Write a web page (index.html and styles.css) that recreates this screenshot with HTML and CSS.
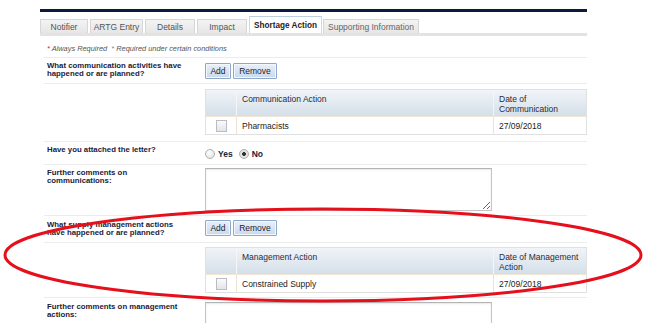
FILE: index.html
```html
<!DOCTYPE html>
<html>
<head>
<meta charset="utf-8">
<link rel="stylesheet" href="styles.css">
</head>
<body>
<div class="page">
  <div class="topbar"></div>
  <div class="tabs">
    <div class="tab t1">Notifier</div>
    <div class="tab t2">ARTG Entry</div>
    <div class="tab t3">Details</div>
    <div class="tab t4">Impact</div>
    <div class="tab active">Shortage Action</div>
    <div class="tab t6">Supporting Information</div>
  </div>
  <div class="strip"></div>
  <div class="req"><span class="star">*</span> Always Required &nbsp;<span class="star2">*</span> Required under certain conditions</div>

  <div class="form">
    <div class="row r1">
      <div class="label">What communication activities have happened or are planned?</div>
      <div class="field btns"><button class="btn">Add</button><button class="btn">Remove</button></div>
    </div>
    <div class="row r2">
      <div class="label"></div>
      <div class="field">
        <table class="grid">
          <tr class="head"><th class="cb"></th><th>Communication Action</th><th class="date">Date of Communication</th></tr>
          <tr><td class="cb"><span class="check"></span></td><td>Pharmacists</td><td class="date">27/09/2018</td></tr>
        </table>
      </div>
    </div>
    <div class="row r3">
      <div class="label">Have you attached the letter?</div>
      <div class="field radios">
        <span class="radio"></span><span class="rlabel">Yes</span>
        <span class="radio on"></span><span class="rlabel">No</span>
      </div>
    </div>
    <div class="row r4">
      <div class="label">Further comments on communications:</div>
      <div class="field"><textarea class="ta"></textarea></div>
    </div>
    <div class="row r5">
      <div class="label">What supply management actions have happened or are planned?</div>
      <div class="field btns"><button class="btn">Add</button><button class="btn">Remove</button></div>
    </div>
    <div class="row r6">
      <div class="label"></div>
      <div class="field">
        <table class="grid">
          <tr class="head"><th class="cb"></th><th>Management Action</th><th class="date">Date of Management Action</th></tr>
          <tr><td class="cb"><span class="check"></span></td><td>Constrained Supply</td><td class="date">27/09/2018</td></tr>
        </table>
      </div>
    </div>
    <div class="row r7">
      <div class="label">Further comments on management actions:</div>
      <div class="field"><textarea class="ta"></textarea></div>
    </div>
  </div>
</div>
<svg class="annot" width="650" height="323" viewBox="0 0 650 323">
  <ellipse cx="323" cy="255" rx="318" ry="46" fill="none" stroke="#e5101b" stroke-width="3"/>
</svg>
</body>
</html>
```
FILE: styles.css
```css
html, body {
  margin: 0;
  padding: 0;
  background: #fff;
  overflow: hidden;
  height: 323px;
}
body {
  font-family: "Liberation Sans", Arial, sans-serif;
  font-size: 8.5px;
  color: #222;
  position: relative;
}
.page {
  margin-left: 40px;
  width: 547px;
  padding-top: 9px;
}
.topbar {
  height: 3px;
  background: #0d1b3d;
}
.tabs {
  display: flex;
  align-items: flex-end;
  height: 21px;
  gap: 2px;
}
.tab {
  height: 14px;
  line-height: 14px;
  background: linear-gradient(#f3f3f3, #e6e6e6);
  border: 1px solid #d6d6d6;
  border-bottom: none;
  color: #555;
  text-align: center;
  white-space: nowrap;
  box-sizing: border-box;
}
.t1 { width: 48px; }
.t2 { width: 53px; }
.t3 { width: 50px; }
.t4 { width: 50px; }
.t6 { width: 96px; color: #666; margin-left: -1px; }
.tab.active {
  width: 73px;
  height: 17px;
  line-height: 17px;
  background: #fff;
  border-color: #cdd9e5;
  border-top: 1px solid #bcd0e2;
  font-weight: bold;
  color: #1e1e1e;
  font-size: 8.2px;
}
.strip {
  height: 3px;
  background: #e3e3e3;
}
.req {
  font-size: 7.4px;
  font-style: italic;
  color: #555;
  padding: 8px 0 0 7px;
  height: 15px;
  line-height: 10px;
  box-sizing: border-box;
}
.star { color: #e02020; }
.star2 { color: #888; }
.form {
  margin-left: 4px;
  margin-top: 6px;
}
.row {
  display: grid;
  grid-template-columns: 161px 1fr;
  border-top: 1px solid #ececec;
  box-sizing: border-box;
}
.label {
  font-weight: bold;
  font-size: 7.8px;
  line-height: 8px;
  color: #1b2138;
  padding-left: 3px;
  padding-right: 20px;
}
.r1 { height: 26px; }
.r1 .label { padding-top: 4px; }
.r1 .field { padding-top: 5px; }
.r2 { height: 58px; }
.r2 .field { padding-top: 5px; }
.r6 .field { padding-top: 4px; }
.r3 { height: 23px; }
.r3 .label { padding-top: 4px; }
.r3 .field { padding-top: 6px; }
.r4 { height: 51px; }
.r4 .label { padding-top: 4px; }
.r4 .field { padding-top: 3px; }
.r5 { height: 27px; }
.r5 .label { padding-top: 5px; }
.r5 .field { padding-top: 4px; }
.r6 { height: 55px; }
.r7 .label { padding-top: 5px; padding-right: 10px; }
.r7 .field { padding-top: 4px; }

.btns { display: flex; gap: 2px; align-items: flex-start; }
.btn {
  font-family: "Liberation Sans", Arial, sans-serif;
  font-size: 8.5px;
  color: #1d1d2a;
  height: 16px;
  padding: 0 4px;
  margin: 0;
  background: linear-gradient(#e8f0fa, #c9d9ed);
  border: 1px solid #8ea8c9;
  border-radius: 1px;
  box-shadow: inset 0 0 0 1px #f3f7fc;
  line-height: 13px;
}
.btn:first-child { width: 26px; }
.btn:last-child { width: 44px; }

.grid {
  width: 382px;
  border-collapse: separate;
  border-spacing: 0;
  border: 1px solid #e0e0e0;
  padding: 0;
  background: #fafafa;
}
.grid th {
  height: 26px;
  vertical-align: top;
  text-align: left;
  font-weight: normal;
  padding: 4px 5px 0 5px;
  line-height: 10px;
  color: #2a2a3a;
  background: linear-gradient(#f1f4f8, #d4dfe9);
  border-right: 1px solid #f4f6f8;
  box-sizing: border-box;
}
.grid th:last-child { border-right: none; }
.grid td {
  height: 18px;
  padding: 0 5px;
  background: #fff;
  border-top: 1px solid #f1e6d6;
  border-right: 1px solid #eee3d2;
  box-sizing: border-box;
  color: #222;
}
.grid td:last-child { border-right: none; }
.grid .cb { width: 31px; padding: 0; text-align: center; }
.grid .date { width: 92px; }
.check {
  display: inline-block;
  width: 9px;
  height: 10px;
  border: 1px solid #b9bcc2;
  background: linear-gradient(#fbfbfb, #e2e4e8);
  vertical-align: middle;
  margin-top: 1px;
}

.radios { display: flex; align-items: center; height: 12px; }
.radio {
  width: 8px;
  height: 8px;
  border-radius: 50%;
  border: 1px solid #b0b0b0;
  background: radial-gradient(circle at 40% 35%, #fff, #dcdcdc);
  margin-right: 3px;
}
.radio.on {
  background: radial-gradient(circle, #333 0 1.6px, #e6e6e6 2.2px, #d6d6d6);
}
.rlabel {
  font-weight: bold;
  color: #1b2138;
  margin-right: 6px;
  font-size: 8.5px;
}
.ta {
  display: block;
  width: 287px;
  height: 43px;
  margin: 0;
  border: 1px solid #c4c4c4;
  border-top-color: #b4b4b4;
  box-shadow: inset 0 1px 2px #e6e6e6;
  box-sizing: border-box;
  resize: both;
  padding: 2px;
}
.annot {
  position: absolute;
  left: 0;
  top: 0;
  pointer-events: none;
}
```
